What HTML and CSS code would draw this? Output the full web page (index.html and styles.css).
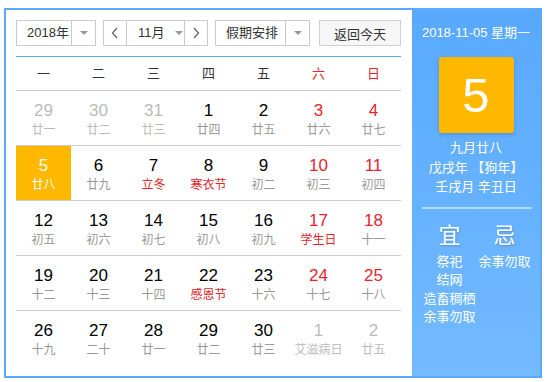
FILE: index.html
```html
<!DOCTYPE html>
<html lang="zh-CN">
<head>
    <meta charset="UTF-8">
    <title>万年历</title>
    <link rel="stylesheet" href="styles.css">
</head>
<body>
    <div class="calendar">
        <div class="main">
            <div class="toolbar">
                <div class="select year">
                    <span class="value">2018年</span>
                    <span class="arrow"></span>
                </div>
                <div class="month-group">
                    <span class="nav">
                        <svg width="8" height="12" viewBox="0 0 8 12"><polyline points="6,1 1.5,6 6,11" fill="none" stroke="#666" stroke-width="1.3"/></svg>
                    </span>
                    <span class="month">
                        <span class="value">11月</span>
                        <span class="tri"></span>
                    </span>
                    <span class="nav">
                        <svg width="8" height="12" viewBox="0 0 8 12"><polyline points="2,1 6.5,6 2,11" fill="none" stroke="#666" stroke-width="1.3"/></svg>
                    </span>
                </div>
                <div class="select holiday">
                    <span class="value">假期安排</span>
                    <span class="arrow"></span>
                </div>
                <button class="today-btn">返回今天</button>
            </div>

            <div class="weekdays">
                <span>一</span><span>二</span><span>三</span><span>四</span><span>五</span>
                <span class="red">六</span><span class="red">日</span>
            </div>

            <div class="days" id="days"></div>
        </div>

        <div class="side">
            <div class="side-date">2018-11-05 星期一</div>
            <div class="big-day">5</div>
            <div class="lunar-info">
                <div>九月廿八</div>
                <div>戊戌年 【狗年】</div>
                <div>壬戌月 辛丑日</div>
            </div>
            <div class="divider"></div>
            <div class="yiji">
                <div class="col">
                    <div class="title">宜</div>
                    <div>祭祀</div>
                    <div>结网</div>
                    <div>造畜稠栖</div>
                    <div>余事勿取</div>
                </div>
                <div class="col">
                    <div class="title">忌</div>
                    <div>余事勿取</div>
                </div>
            </div>
        </div>
    </div>

    <script>
        // [日, 农历, 类型]  o = 其他月份, w = 周末, f = 节日, t = 今天
        const dias = [
            [29, '廿一', 'o'], [30, '廿二', 'o'], [31, '廿三', 'o'], [1, '廿四', ''], [2, '廿五', ''], [3, '廿六', 'w'], [4, '廿七', 'w'],
            [5, '廿八', 't'], [6, '廿九', ''], [7, '立冬', 'f'], [8, '寒衣节', 'f'], [9, '初二', ''], [10, '初三', 'w'], [11, '初四', 'w'],
            [12, '初五', ''], [13, '初六', ''], [14, '初七', ''], [15, '初八', ''], [16, '初九', ''], [17, '学生日', 'w f'], [18, '十一', 'w'],
            [19, '十二', ''], [20, '十三', ''], [21, '十四', ''], [22, '感恩节', 'f'], [23, '十六', ''], [24, '十七', 'w'], [25, '十八', 'w'],
            [26, '十九', ''], [27, '二十', ''], [28, '廿一', ''], [29, '廿二', ''], [30, '廿三', ''], [1, '艾滋病日', 'o'], [2, '廿五', 'o']
        ];

        const classes = { o: 'other', w: 'weekend', f: 'festival', t: 'today' };
        let html = '';
        for (let r = 0; r < 5; r++) {
            html += '<div class="week">';
            dias.slice(r * 7, r * 7 + 7).forEach(d => {
                const cls = d[2].split(' ').filter(Boolean).map(k => classes[k]).join(' ');
                html += `<div class="day ${cls}"><div class="num">${d[0]}</div><div class="lunar">${d[1]}</div></div>`;
            });
            html += '</div>';
        }
        document.getElementById('days').innerHTML = html;
    </script>
</body>
</html>
```

FILE: styles.css
```css
body {
    margin: 8px 4px;
    font-family: "Liberation Sans", "Noto Sans CJK SC", sans-serif;
    color: #333;
}

.calendar {
    display: flex;
    width: 538px;
    height: 370px;
    box-sizing: border-box;
    border: 2px solid #5aabff;
}

.main {
    width: 406px;
    box-sizing: border-box;
    padding: 10px 11px 0 10px;
    background: #fff;
}

/* toolbar */
.toolbar {
    display: flex;
    height: 26px;
    font-size: 13px;
    white-space: nowrap;
}

.select,
.month-group {
    display: flex;
    align-items: stretch;
    height: 26px;
    box-sizing: border-box;
    border: 1px solid #ccc;
    background: #fff;
}

.select .value {
    flex: 1;
    padding-left: 10px;
    line-height: 24px;
}

.select .arrow {
    width: 23px;
    border-left: 1px solid #ccc;
    display: flex;
    align-items: center;
    justify-content: center;
}

.select .arrow::after,
.month .tri {
    content: "";
    width: 0;
    height: 0;
    border-left: 4px solid transparent;
    border-right: 4px solid transparent;
    border-top: 4px solid #999;
}

.year {
    width: 80px;
}

.month-group {
    width: 105px;
    margin-left: 7px;
}

.month-group .nav {
    width: 22px;
    flex-shrink: 0;
    display: flex;
    align-items: center;
    justify-content: center;
}

.month-group .nav:first-child {
    border-right: 1px solid #ccc;
}

.month-group .nav:last-child {
    border-left: 1px solid #ccc;
}

.month {
    flex: 1;
    display: flex;
    align-items: center;
    padding-left: 11px;
}

.month .value {
    line-height: 24px;
    margin-right: 10px;
}

.holiday {
    width: 95px;
    margin-left: 7px;
}

.today-btn {
    width: 82px;
    height: 26px;
    margin-left: 9px;
    padding: 0;
    border: 1px solid #d0d0d0;
    background: #f6f6f6;
    font-family: inherit;
    font-size: 13px;
    color: #333;
}

/* grid */
.weekdays {
    display: grid;
    grid-template-columns: repeat(7, 55px);
    margin-top: 10px;
    border-top: 1px solid #5aabff;
    border-bottom: 1px solid #ccc;
    height: 33px;
    line-height: 33px;
    font-size: 13px;
    text-align: center;
}

.red {
    color: #e5262d;
}

.week {
    display: grid;
    grid-template-columns: repeat(7, 55px);
    height: 54px;
    border-bottom: 1px solid #ccc;
}

.week:last-child {
    border-bottom: none;
}

.day {
    text-align: center;
    padding-top: 10px;
}

.day .num {
    font-size: 17px;
    line-height: 20px;
    color: #000;
}

.day .lunar {
    font-size: 12px;
    line-height: 18px;
    color: #999;
}

.day.weekend .num,
.day.festival .lunar {
    color: #e5262d;
}

.day.other .num,
.day.other .lunar {
    color: #bbb;
}

.day.today {
    background: #ffb800;
}

.day.today .num,
.day.today .lunar {
    color: #fff;
}

/* side panel */
.side {
    flex: 1;
    background: linear-gradient(#58a9ff, #73baff);
    color: #fff;
    text-align: center;
    font-size: 13px;
}

.side-date {
    margin-top: 13px;
    line-height: 20px;
}

.big-day {
    width: 75px;
    height: 76px;
    margin: 14px auto 0;
    background: #ffb800;
    border-radius: 3px;
    box-shadow: 0 2px 4px rgba(0, 0, 0, 0.15);
    font-size: 49px;
    line-height: 76px;
}

.lunar-info {
    margin-top: 5px;
    line-height: 19.5px;
}

.divider {
    height: 2px;
    margin: 10px 8px 0 10px;
    background: rgba(255, 255, 255, 0.5);
}

.yiji {
    display: flex;
    margin: 12px 8px 0 10px;
}

.yiji .col {
    width: 55px;
    line-height: 18.5px;
    white-space: nowrap;
}

.yiji .title {
    font-size: 22px;
    line-height: 30px;
    margin-bottom: 2px;
    text-shadow: 1px 1px 2px rgba(0, 0, 0, 0.2);
}
```
